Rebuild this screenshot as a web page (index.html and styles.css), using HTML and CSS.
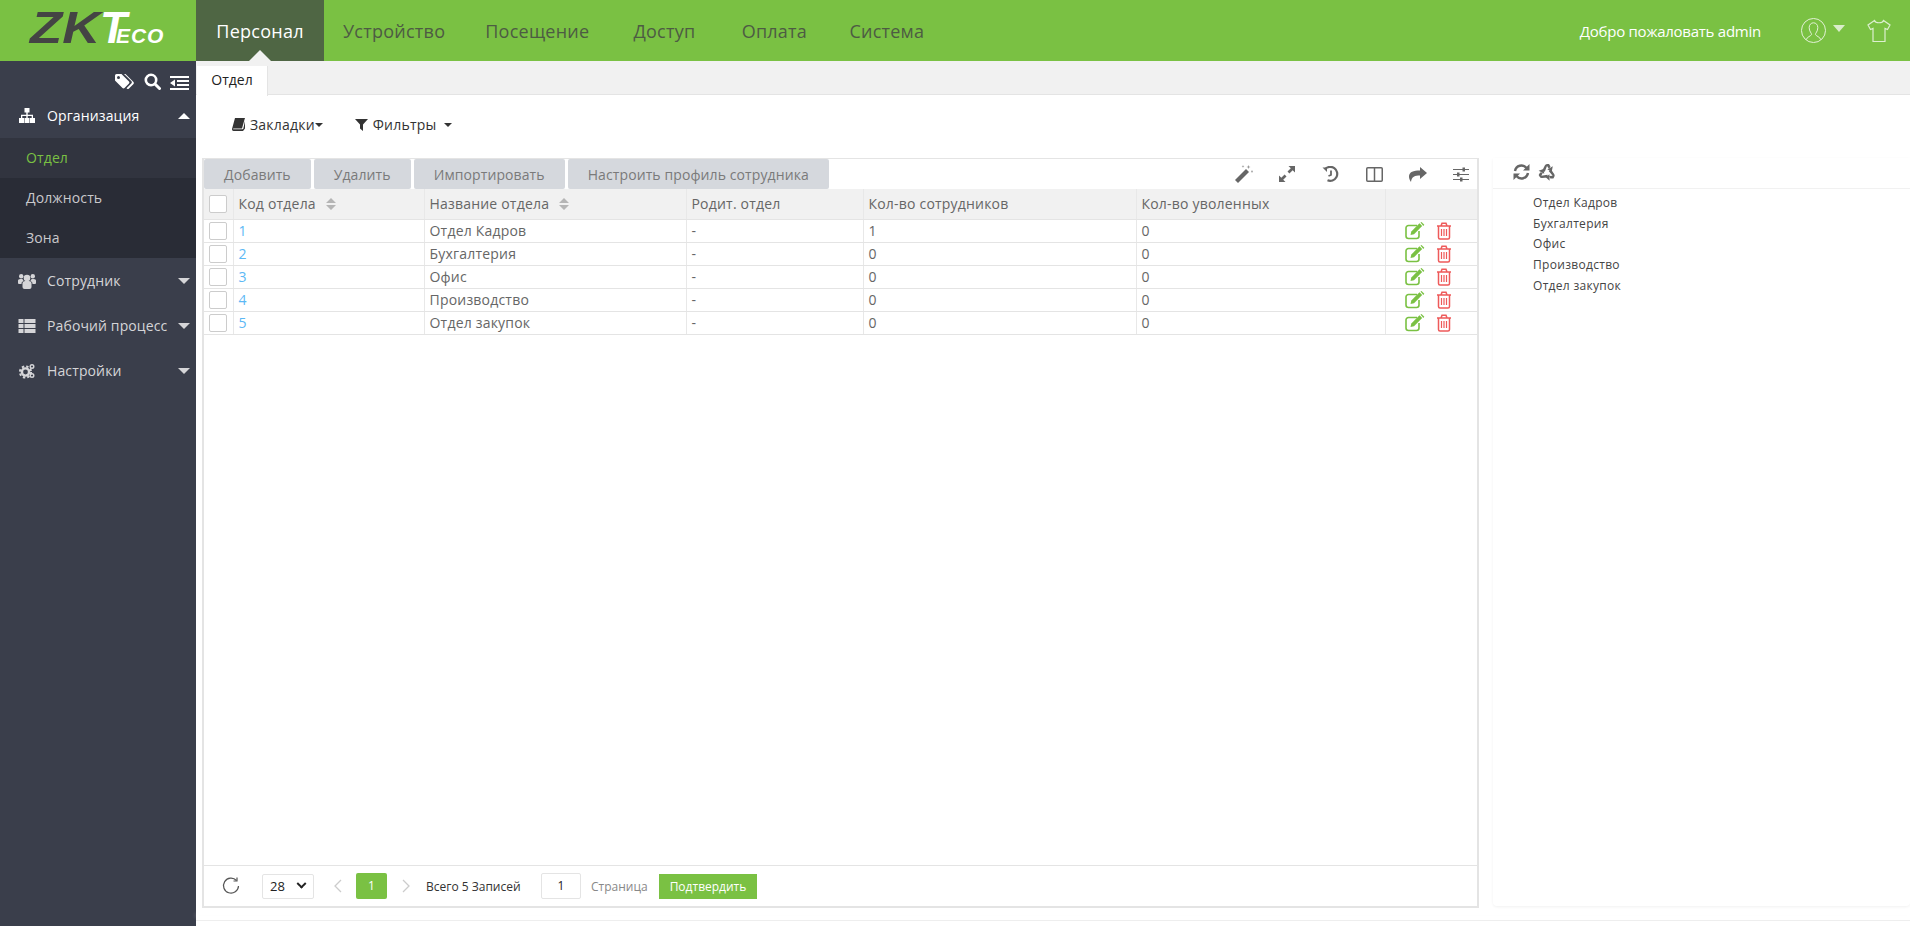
FILE: index.html
```html
<!DOCTYPE html>
<html lang="ru">
<head>
    <meta charset="UTF-8">
    <title>Отдел</title>
    <link rel="stylesheet" href="styles.css">
</head>
<body>
<svg class="defs" width="0" height="0">
    <symbol id="i-edit" viewBox="0 0 20 18">
        <path d="M14 9v5a2.500 2.500 0 0 1-2.500 2.500h-8A2.500 2.500 0 0 1 1 14V6a2.500 2.500 0 0 1 2.500-2.500H12" fill="none" stroke="#7ac143" stroke-width="1.600"/>
        <path d="M5.500 13l.8-3.500L14.500 1.300l2.700 2.700L9 12.200z" fill="#7ac143"/>
        <path d="M15.500.6l1-.6 2.800 2.800-1 1.100z" fill="#7ac143"/>
    </symbol>
    <symbol id="i-trash" viewBox="0 0 16 18">
        <path d="M1 4h14M5 4l1-2.800h4L11 4M2.500 4v11.500a1.500 1.500 0 0 0 1.500 1.500h8a1.500 1.500 0 0 0 1.500-1.500V4" fill="none" stroke="#ee5a5a" stroke-width="1.500"/>
        <path d="M5.500 7v7M8 7v7M10.500 7v7" stroke="#ee5a5a" stroke-width="1.200"/>
    </symbol>
    <symbol id="i-sort" viewBox="0 0 10 12">
        <path d="M5 0l5 5H0zM5 12L0 7h10z" fill="#b5b5b5"/>
    </symbol>
    <symbol id="i-cog" viewBox="0 0 16 16">
        <circle cx="6.500" cy="9" r="3.600" fill="none" stroke="currentColor" stroke-width="2.400"/>
        <circle cx="6.500" cy="9" r="5.600" fill="none" stroke="currentColor" stroke-width="2" stroke-dasharray="2.400 2"/>
        <circle cx="13" cy="3.500" r="1.800" fill="none" stroke="currentColor" stroke-width="1.400"/>
        <circle cx="13" cy="12.500" r="1.800" fill="none" stroke="currentColor" stroke-width="1.400"/>
    </symbol>
</svg>

<div class="app">
    <div class="logo">
        <span class="logo-zk">ZK</span><span class="logo-t">T</span><span class="logo-eco">ECO</span>
    </div>
    <header class="topbar">
        <nav class="nav">
            <a class="nav-item active">Персонал</a>
            <a class="nav-item">Устройство</a>
            <a class="nav-item">Посещение</a>
            <a class="nav-item">Доступ</a>
            <a class="nav-item">Оплата</a>
            <a class="nav-item">Система</a>
        </nav>
        <div class="user">
            <span class="welcome">Добро пожаловать admin</span>
            <svg class="user-icon" width="25" height="25" viewBox="0 0 26 26" fill="none" stroke="#e6f3dc" stroke-width="1">
                <ellipse cx="13" cy="13" rx="12.500" ry="12.500"/>
                <path d="M5.500 22.500c.5-3 5-3.500 5.500-5.500.2-1-2.500-3-2.500-7 0-3 2-5 4.500-5s4.500 2 4.500 5c0 4-2.700 6-2.500 7 .5 2 5 2.500 5.500 5.500"/>
            </svg>
            <span class="caret-user"></span>
            <svg class="shirt" width="26" height="24" viewBox="0 0 24 24" fill="none" stroke="#dcefcf" stroke-width="1.200">
                <path d="M7.500 1.500L1 6l2.500 4.500 2.500-1V22.500h12V9.500l2.500 1L23 6l-6.500-4.500c-1 3-8 3-9 0z"/>
            </svg>
        </div>
    </header>

    <aside class="sidebar">
        <div class="side-tools">
            <svg width="20" height="16" viewBox="0 0 20 16" fill="#fff">
                <path d="M0 1.500A1.500 1.500 0 0 1 1.500 0h5L14 7.500a1.500 1.500 0 0 1 0 2L9.500 14a1.500 1.500 0 0 1-2 0L0 6.500zM3.500 5a1.500 1.500 0 1 0 0-3 1.500 1.500 0 0 0 0 3z" fill-rule="evenodd"/>
                <path d="M9 0h1.500L18.500 8a1.500 1.500 0 0 1 0 2L14 14.500a1.500 1.500 0 0 1-2.200 0l-.3-.3 5-5a1.600 1.600 0 0 0 0-2z"/>
            </svg>
            <svg width="17" height="17" viewBox="0 0 17 17" fill="none" stroke="#fff">
                <circle cx="7" cy="7" r="5.200" stroke-width="2.600"/>
                <path d="M11 11l4.500 4.500" stroke-width="3" stroke-linecap="round"/>
            </svg>
            <svg width="19" height="14" viewBox="0 0 19 14" fill="#fff">
                <path d="M0 0h19v2H0zM7 4h12v2H7zM7 8h12v2H7zM0 12h19v2H0zM5 3.500v7L0 7z"/>
            </svg>
        </div>

        <div class="menu-head open">
            <svg class="menu-icon" width="17" height="15" viewBox="0 0 17 15" fill="currentColor">
                <path d="M6 0h5v4.500H9.200v2.200h5.300V10H16.500v5h-5v-5h1.700V8H9.200v2H11v5H6v-5h1.800V8H3.800v2H5.500v5h-5v-5h2V6.700h5.300V4.500H6z"/>
            </svg>
            <span class="menu-label">Организация</span>
            <span class="caret up"></span>
        </div>
        <div class="submenu">
            <a class="sub-item current">Отдел</a>
            <a class="sub-item">Должность</a>
            <a class="sub-item">Зона</a>
        </div>
        <div class="menu-head">
            <svg class="menu-icon" width="18" height="16" viewBox="0 0 18 16" fill="currentColor">
                <circle cx="9" cy="5" r="3.300"/>
                <circle cx="3.200" cy="3.200" r="2.200"/>
                <circle cx="14.800" cy="3.200" r="2.200"/>
                <path d="M4.500 10.500c0-2 1.500-2.500 4.500-2.500s4.500.5 4.500 2.500V14a2 2 0 0 1-2 2h-5a2 2 0 0 1-2-2z"/>
                <path d="M0 7.500C0 6 1.500 6 4.500 6c.3 1 .8 1.500 1.300 2-1.500.4-2.300 1.200-2.300 3H1a1 1 0 0 1-1-1zM18 7.500C18 6 16.500 6 13.500 6c-.3 1-.8 1.500-1.300 2 1.500.4 2.300 1.200 2.300 3H17a1 1 0 0 0 1-1z"/>
            </svg>
            <span class="menu-label">Сотрудник</span>
            <span class="caret"></span>
        </div>
        <div class="menu-head">
            <svg class="menu-icon" width="17" height="14" viewBox="0 0 17 14" fill="currentColor">
                <path d="M0 0h5v4H0zM6 0h11v4H6zM0 5h5v4H0zM6 5h11v4H6zM0 10h5v4H0zM6 10h11v4H6z"/>
            </svg>
            <span class="menu-label">Рабочий процесс</span>
            <span class="caret"></span>
        </div>
        <div class="menu-head">
            <svg class="menu-icon" width="17" height="16"><use href="#i-cog"/></svg>
            <span class="menu-label">Настройки</span>
            <span class="caret"></span>
        </div>
    </aside>

    <main class="content">
        <div class="tabs">
            <div class="tab">Отдел</div>
        </div>
        <div class="filters">
            <span class="filter-btn first">
                <svg width="13" height="13" viewBox="0 0 13 13" fill="#333">
                    <path d="M3 0h10l-.5 1.500-2.500 9H1.800c-.6 0-.8.4-.6.8h9.300l.8-.5L13 3v7.500l-2 2.500H1.500C.5 13 0 12 0 11z"/>
                </svg>
                Закладки<span class="caret-dark tight"></span>
            </span>
            <span class="filter-btn">
                <svg width="13" height="13" viewBox="0 0 13 13" fill="#333">
                    <path d="M0 1h13L8 6.500V13L5 10.500v-4z"/>
                </svg>
                Фильтры<span class="caret-dark"></span>
            </span>
        </div>

        <div class="workspace">
            <section class="grid-box">
                <div class="grid-toolbar">
                    <button class="btn">Добавить</button>
                    <button class="btn">Удалить</button>
                    <button class="btn">Импортировать</button>
                    <button class="btn">Настроить профиль сотрудника</button>
                    <div class="grid-tools">
                        <svg width="18" height="18" viewBox="0 0 18 18" fill="#666">
                            <path d="M0 15l11-11 3 3L3 18z"/>
                            <path d="M13.500 0l.6 1.400 1.400.6-1.400.6-.6 1.400-.6-1.400-1.400-.6 1.400-.6zM17 5l.5 1 .5.500-.5.500-.5 1-.5-1-.5-.5.5-.5zM8 0l.4 1 1 .4-1 .4L8 3l-.4-1.200-1-.4 1-.4z" fill="#999"/>
                        </svg>
                        <svg width="16" height="16" viewBox="0 0 16 16" fill="#666">
                            <path d="M9.500 0H16v6.500l-2.300-2.300-3.300 3.300-1.900-1.900 3.300-3.300zM6.500 16H0V9.500l2.300 2.300 3.300-3.300 1.900 1.900-3.300 3.300z"/>
                        </svg>
                        <svg width="17" height="16" viewBox="0 0 16 16" fill="none" stroke="#666" stroke-width="2.200">
                            <path d="M2.500 3.200A7 7 0 1 1 5 14.300"/>
                            <path d="M0 1.500h4.500V6z" fill="#666" stroke="none"/>
                            <path d="M8.500 4.500V9L6 10" stroke-width="1.800"/>
                        </svg>
                        <svg width="17" height="15" viewBox="0 0 17 15" fill="none" stroke="#666" stroke-width="1.500">
                            <rect x=".75" y=".75" width="15.500" height="13.500" rx="1"/>
                            <path d="M8.500 1v13"/>
                        </svg>
                        <svg width="18" height="15" viewBox="0 0 18 15" fill="#666">
                            <path d="M11 0l7 6-7 6V8.500C6 8.500 2.500 9.500 2 15 .5 13 0 11 0 9.500 0 5 4.500 3.500 11 3.500z"/>
                        </svg>
                        <svg width="16" height="15" viewBox="0 0 16 15" fill="#666">
                            <path d="M0 2h16v1H0zM0 7h16v1H0zM0 12h16v1H0z"/>
                            <path d="M9.500 0.500h2.500v4H9.500zM4 5.500h2.500v4H4zM7 10.500h2.500v4H7z"/>
                        </svg>
                    </div>
                </div>

                <table class="grid-table">
                    <colgroup>
                        <col class="col-check">
                        <col class="col-code">
                        <col class="col-name">
                        <col class="col-parent">
                        <col class="col-staff">
                        <col class="col-left">
                        <col>
                    </colgroup>
                    <thead>
                        <tr>
                            <th class="check-cell"><span class="check"></span></th>
                            <th>Код отдела <svg class="sort" width="10" height="12"><use href="#i-sort"/></svg></th>
                            <th>Название отдела <svg class="sort" width="10" height="12"><use href="#i-sort"/></svg></th>
                            <th>Родит. отдел</th>
                            <th>Кол-во сотрудников</th>
                            <th>Кол-во уволенных</th>
                            <th></th>
                        </tr>
                    </thead>
                    <tbody>
                        <tr>
                            <td class="check-cell"><span class="check"></span></td>
                            <td><a class="code-link">1</a></td>
                            <td>Отдел Кадров</td>
                            <td>-</td>
                            <td>1</td>
                            <td>0</td>
                            <td class="ops"><svg width="20" height="18"><use href="#i-edit"/></svg><svg width="16" height="18"><use href="#i-trash"/></svg></td>
                        </tr>
                        <tr>
                            <td class="check-cell"><span class="check"></span></td>
                            <td><a class="code-link">2</a></td>
                            <td>Бухгалтерия</td>
                            <td>-</td>
                            <td>0</td>
                            <td>0</td>
                            <td class="ops"><svg width="20" height="18"><use href="#i-edit"/></svg><svg width="16" height="18"><use href="#i-trash"/></svg></td>
                        </tr>
                        <tr>
                            <td class="check-cell"><span class="check"></span></td>
                            <td><a class="code-link">3</a></td>
                            <td>Офис</td>
                            <td>-</td>
                            <td>0</td>
                            <td>0</td>
                            <td class="ops"><svg width="20" height="18"><use href="#i-edit"/></svg><svg width="16" height="18"><use href="#i-trash"/></svg></td>
                        </tr>
                        <tr>
                            <td class="check-cell"><span class="check"></span></td>
                            <td><a class="code-link">4</a></td>
                            <td>Производство</td>
                            <td>-</td>
                            <td>0</td>
                            <td>0</td>
                            <td class="ops"><svg width="20" height="18"><use href="#i-edit"/></svg><svg width="16" height="18"><use href="#i-trash"/></svg></td>
                        </tr>
                        <tr>
                            <td class="check-cell"><span class="check"></span></td>
                            <td><a class="code-link">5</a></td>
                            <td>Отдел закупок</td>
                            <td>-</td>
                            <td>0</td>
                            <td>0</td>
                            <td class="ops"><svg width="20" height="18"><use href="#i-edit"/></svg><svg width="16" height="18"><use href="#i-trash"/></svg></td>
                        </tr>
                    </tbody>
                </table>

                <div class="pager">
                    <svg class="pager-refresh" width="18" height="18" viewBox="0 0 18 18" fill="none" stroke="#555" stroke-width="1.200">
                        <path d="M14.500 3.500A7.500 7.500 0 1 0 16.500 9"/>
                        <path d="M15 .5v3.500h-3.500"/>
                    </svg>
                    <div class="page-size">28<span class="chev"></span></div>
                    <svg class="page-arrow prev" width="9" height="14" viewBox="0 0 9 14" fill="none" stroke="#ccc" stroke-width="1.300"><path d="M8 1L2 7l6 6"/></svg>
                    <span class="page-current">1</span>
                    <svg class="page-arrow next" width="9" height="14" viewBox="0 0 9 14" fill="none" stroke="#ccc" stroke-width="1.300"><path d="M1 1l6 6-6 6"/></svg>
                    <span class="page-total">Всего 5 Записей</span>
                    <span class="page-input">1</span>
                    <span class="page-word">Страница</span>
                    <button class="page-ok">Подтвердить</button>
                </div>
            </section>

            <section class="tree-box">
                <div class="tree-tools">
                    <svg width="17" height="16" viewBox="0 0 17 16" fill="none" stroke="#666" stroke-width="2.400">
                        <path d="M2 7a6.500 6.500 0 0 1 11.500-3M15 9a6.500 6.500 0 0 1-11.500 3"/>
                        <path d="M16.500 0v6.500H10zM.500 16V9.500H7z" fill="#666" stroke="none"/>
                    </svg>
                    <svg width="18" height="18" viewBox="0 0 18 18" fill="#666">
                        <g id="recycle-arm">
                            <path d="M4.200 7.800L6.800 2.500Q7.500 1 9 1h2l1.500 2.600L11 6 9 3 6.800 8.800z"/>
                            <path d="M14.800 3.200l-1 5-4.500-1.700z"/>
                        </g>
                        <use href="#recycle-arm" transform="rotate(120 9 9.500)"/>
                        <use href="#recycle-arm" transform="rotate(240 9 9.500)"/>
                    </svg>
                </div>
                <ul class="tree">
                    <li>Отдел Кадров</li>
                    <li>Бухгалтерия</li>
                    <li>Офис</li>
                    <li>Производство</li>
                    <li>Отдел закупок</li>
                </ul>
            </section>
        </div>
        <div class="page-foot"></div>
    </main>
</div>
</body>
</html>
```

FILE: styles.css
```css
* {
    box-sizing: border-box;
}
html, body {
    margin: 0;
    height: 100%;
    overflow: hidden;
    background: #fff;
}
body {
    font-family: "Open Sans", "Noto Sans", sans-serif;
    font-size: 14px;
    color: #666;
}
.defs {
    position: absolute;
}
.app {
    display: grid;
    grid-template-columns: 196px 1fr;
    grid-template-rows: 61px 865px;
    height: 926px;
}

/* Header */
.logo {
    background: #7ac143;
    display: flex;
    align-items: baseline;
    padding: 6px 0 0 30px;
    font-family: "Liberation Sans", sans-serif;
    font-style: italic;
    font-weight: bold;
    line-height: 44px;
}
.logo-zk {
    display: inline-block;
    font-size: 45px;
    color: #444;
    transform: scaleX(1.17);
    transform-origin: left;
    margin-right: 10px;
}
.logo-t {
    font-size: 44px;
    letter-spacing: -11px;
    color: #fff;
}
.logo-eco {
    font-size: 21px;
    letter-spacing: 1px;
    color: #fff;
}
.topbar {
    background: #7ac143;
    display: flex;
    justify-content: space-between;
}
.nav {
    display: flex;
}
.nav-item {
    position: relative;
    display: flex;
    align-items: center;
    justify-content: center;
    min-width: 110px;
    padding: 0 20px;
    font-size: 18px;
    letter-spacing: .25px;
    color: #4d5b43;
}
.nav-item.active {
    min-width: 128px;
    margin-right: -1px;
    background: #4f6644;
    color: #fff;
}
.nav-item.active::after {
    content: "";
    position: absolute;
    left: 50%;
    bottom: 0;
    margin-left: -11px;
    border-left: 11px solid transparent;
    border-right: 11px solid transparent;
    border-bottom: 11px solid #f1f1f1;
}
.user {
    display: flex;
    align-items: center;
    padding-right: 18px;
    color: #fff;
}
.welcome {
    font-size: 15px;
    letter-spacing: -.25px;
    margin-right: 40px;
}
.caret-user {
    border-left: 6px solid transparent;
    border-right: 6px solid transparent;
    border-top: 7px solid #d9ecca;
    margin: 0 21px 4px 7px;
}

/* Sidebar */
.sidebar {
    background: #3a3e4b;
    color: #d5d5d8;
    letter-spacing: .12px;
}
.side-tools {
    height: 32px;
    display: flex;
    justify-content: flex-end;
    align-items: flex-end;
    gap: 9px;
    padding: 0 7px 3px 0;
}
.menu-head {
    height: 45px;
    display: flex;
    align-items: center;
    padding: 0 6px 0 18px;
}
.menu-head.open {
    color: #fff;
}
.menu-icon {
    width: 18px;
    margin-right: 11px;
    flex: none;
}
.menu-label {
    flex: 1;
    white-space: nowrap;
}
.caret {
    border-left: 6px solid transparent;
    border-right: 6px solid transparent;
    border-top: 6px solid #d5d5d8;
}
.caret.up {
    border-top: 0;
    border-bottom: 6px solid #fff;
}
.submenu {
    background: #292c36;
}
.sub-item {
    display: flex;
    align-items: center;
    height: 40px;
    padding: 0 0 2px 26px;
    color: #c9c9cc;
}
.sub-item.current {
    background: #31343f;
    color: #7ac143;
}

/* Content */
.content {
    display: flex;
    flex-direction: column;
    min-width: 0;
}
.tabs {
    height: 34px;
    background: #f1f1f1;
    border-bottom: 1px solid #e4e4e4;
    padding: 5px 0 0 1px;
}
.tab {
    width: 71px;
    height: 30px;
    background: #fff;
    color: #222;
    text-align: center;
    line-height: 28px;
    border-right: 1px solid #e4e4e4;
}
.filters {
    height: 63px;
    display: flex;
    align-items: center;
    padding: 0 0 4px 36px;
    color: #333;
    letter-spacing: .2px;
}
.filter-btn {
    display: flex;
    align-items: center;
    gap: 5px;
    margin-right: 32px;
}
.caret-dark {
    border-left: 4px solid transparent;
    border-right: 4px solid transparent;
    border-top: 4px solid #333;
    margin-left: 3px;
}
.caret-dark.tight {
    margin-left: -5px;
}
.workspace {
    display: flex;
    height: 750px;
    padding-left: 6px;
}
.grid-box {
    width: 1277px;
    height: 750px;
    display: flex;
    flex-direction: column;
    border: 1px solid #e4e4e4;
    border-width: 1px 2px 2px 2px;
    letter-spacing: .2px;
}
.grid-toolbar {
    height: 30px;
    display: flex;
    gap: 3px;
    flex: none;
}
.btn {
    border: 0;
    background: #d5d8dd;
    border-radius: 2px;
    color: #7a7a7a;
    font: inherit;
    letter-spacing: .1px;
    padding: 0 20px;
}
.grid-tools {
    margin: 0 -6px 0 auto;
    display: grid;
    grid-template-columns: repeat(6, 43.5px);
    justify-items: center;
    align-items: center;
}
.grid-table {
    width: 100%;
    table-layout: fixed;
    border-collapse: collapse;
    flex: none;
}
.col-check {
    width: 29px;
}
.col-code {
    width: 191px;
}
.col-name {
    width: 262px;
}
.col-parent {
    width: 177px;
}
.col-staff {
    width: 273px;
}
.col-left {
    width: 249px;
}
.grid-table th,
.grid-table td {
    border-right: 1px solid #e8e8e8;
    border-bottom: 1px solid #e4e4e4;
    padding: 0 0 0 5px;
    font-weight: normal;
    text-align: left;
    white-space: nowrap;
}
.grid-table th {
    background: #f1f1f1;
    height: 30px;
}
.grid-table td {
    height: 23px;
    line-height: 20px;
}
.grid-table .check-cell {
    line-height: 0;
}
.grid-table tr > :last-child {
    border-right: 0;
}
.check {
    display: inline-block;
    width: 18px;
    height: 18px;
    background: #fff;
    border: 1px solid #ccc;
    border-radius: 2px;
}
.sort {
    margin-left: 6px;
    vertical-align: -1px;
}
.code-link {
    color: #5cb8f5;
}
.grid-table .ops {
    padding: 0 0 0 19px;
    line-height: 0;
}
.ops svg {
    vertical-align: middle;
    margin-right: 11px;
}

/* Pager */
.pager {
    margin-top: auto;
    height: 41px;
    border-top: 1px solid #e4e4e4;
    display: flex;
    align-items: center;
    padding-left: 18px;
    font-size: 12px;
    letter-spacing: 0;
}
.pager-refresh {
    margin-right: 22px;
}
.page-size {
    width: 52px;
    height: 25px;
    border: 1px solid #e4e4e4;
    border-radius: 2px;
    display: flex;
    align-items: center;
    justify-content: space-between;
    padding: 0 8px 0 7px;
    font-size: 13px;
    color: #222;
}
.chev {
    width: 7px;
    height: 7px;
    border-right: 2px solid #222;
    border-bottom: 2px solid #222;
    transform: rotate(45deg) translate(-2px, -2px);
}
.page-arrow.prev {
    margin: 0 14px 0 19px;
}
.page-arrow.next {
    margin: 0 15px;
}
.page-current {
    width: 31px;
    height: 26px;
    background: #7ac143;
    color: #fff;
    border-radius: 2px;
    text-align: center;
    line-height: 26px;
}
.page-total {
    color: #333;
    width: 115px;
}
.page-input {
    width: 40px;
    height: 26px;
    border: 1px solid #e4e4e4;
    border-radius: 2px;
    text-align: center;
    line-height: 24px;
    color: #222;
    margin-right: 10px;
}
.page-word {
    color: #888;
    width: 68px;
}
.page-ok {
    width: 98px;
    height: 25px;
    border: 0;
    background: #7ac143;
    color: #fff;
    font: inherit;
    padding: 0;
}

/* Tree */
.tree-box {
    flex: 1;
    margin-left: 14px;
    height: 748px;
    border-radius: 0 0 4px 4px;
    box-shadow: 0 1px 3px rgba(0, 0, 0, 0.06);
}
.tree-tools {
    height: 31px;
    border-bottom: 1px solid #f1f1f1;
    display: flex;
    align-items: center;
    gap: 8px;
    padding: 0 0 2px 20px;
}
.tree {
    list-style: none;
    margin: 0;
    padding: 4px 0 0 40px;
    font-size: 12px;
    letter-spacing: .3px;
    color: #444;
}
.tree li {
    height: 20.7px;
    line-height: 20.7px;
}
.page-foot {
    margin-top: 12px;
    height: 1px;
    background: #eee;
    box-shadow: 0 -5px 4px #fafafa;
}
```
